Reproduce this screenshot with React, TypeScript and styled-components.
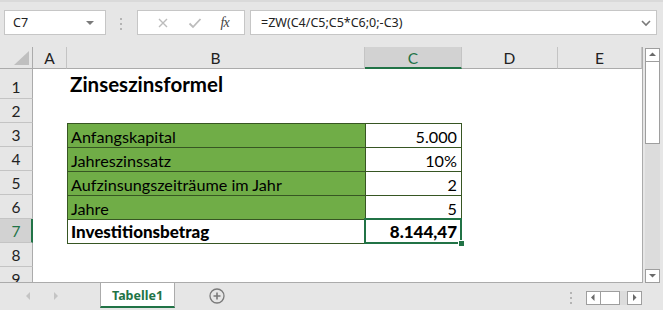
import styled, { createGlobalStyle, css } from "styled-components";

const GlobalStyle = createGlobalStyle`
	html, body {
		margin: 0;
		padding: 0;
		background: #e6e6e6;
	}
`;

const GREEN = "#217346";
const TABLE_LINE = "#375623";
const FILL = "#70ad47";
const UI_FONT = `"Noto Sans", "Open Sans", sans-serif`;
const CELL_FONT = `Lato, "Liberation Sans", sans-serif`;

const StyledWindow = styled.div`
	width: 663px;
	height: 310px;
	display: flex;
	flex-direction: column;
	background: #e6e6e6;
	overflow: hidden;
`;

/* ---------- formula bar ---------- */

const StyledFormulaBar = styled.div`
	height: 47px;
	display: flex;
	align-items: flex-start;
	padding: 10px 6px 0 4px;
	box-sizing: border-box;
	border-top: 2px solid #dadada;
`;

const StyledBox = styled.div<{ width?: number }>`
	height: 25px;
	box-sizing: border-box;
	background: #fff;
	border: 1px solid #c6c6c6;
	display: flex;
	align-items: center;
	font-family: ${UI_FONT};
	font-size: 12.5px;
	color: #222;
	margin-top: -2px;
	${p =>
		p.width
			? css`
					width: ${p.width}px;
					flex: none;
			  `
			: css`
					flex: 1;
			  `}
`;

const StyledNameText = styled.span`
	flex: 1;
	padding-left: 8px;
`;

const StyledFormulaText = styled.span`
	flex: 1;
	padding-left: 10px;
`;

const StyledGrip = styled.div`
	width: 31px;
	display: flex;
	justify-content: center;
	padding-top: 6px;
`;

const StyledFxGroup = styled(StyledBox)`
	margin-right: 5px;
	justify-content: space-around;
	padding: 0 6px 0 10px;
`;

const StyledFx = styled.span`
	font-family: "Liberation Serif", serif;
	font-style: italic;
	font-size: 14px;
	color: #444;
	letter-spacing: -1px;
`;

function GripDots() {
	return (
		<svg width="3" height="12" viewBox="0 0 3 12">
			<rect x="0" y="0" width="2" height="2" fill="#b4b4b4" />
			<rect x="0" y="5" width="2" height="2" fill="#b4b4b4" />
			<rect x="0" y="10" width="2" height="2" fill="#b4b4b4" />
		</svg>
	);
}

function FormulaBar() {
	return (
		<StyledFormulaBar>
			<StyledBox width={102}>
				<StyledNameText>C7</StyledNameText>
				<svg width="18" height="8" viewBox="0 0 18 8" style={{ marginRight: 4 }}>
					<path d="M3 2 L11 2 L7 6 Z" fill="#7a7a7a" />
				</svg>
			</StyledBox>
			<StyledGrip>
				<GripDots />
			</StyledGrip>
			<StyledFxGroup width={108}>
				<svg width="12" height="12" viewBox="0 0 12 12">
					<path d="M2 2 L10 10 M10 2 L2 10" stroke="#bcbcbc" strokeWidth="1.4" />
				</svg>
				<svg width="14" height="12" viewBox="0 0 14 12">
					<path d="M1.5 6.5 L5 10 L12.5 2" stroke="#bcbcbc" strokeWidth="1.8" fill="none" />
				</svg>
				<StyledFx>fx</StyledFx>
			</StyledFxGroup>
			<StyledBox>
				<StyledFormulaText>=ZW(C4/C5;C5*C6;0;-C3)</StyledFormulaText>
				<svg width="12" height="8" viewBox="0 0 12 8" style={{ marginRight: 4 }}>
					<path d="M2 2 L6 6 L10 2" stroke="#7a7a7a" strokeWidth="1.6" fill="none" />
				</svg>
			</StyledBox>
		</StyledFormulaBar>
	);
}

/* ---------- sheet ---------- */

const StyledSheetArea = styled.div`
	height: 236px;
	display: flex;
`;

const StyledGrid = styled.div`
	width: 643px;
	height: 236px;
	box-sizing: border-box;
	border-right: 1px solid #ababab;
	border-bottom: 1px solid #ababab;
	background: #fff;
	overflow: hidden;
	display: grid;
	grid-template-columns: 33px 34px 298px 97px 96px 84px;
	grid-template-rows: 22px 30px repeat(8, 24px);
`;

const headerBase = css<{ active?: boolean }>`
	box-sizing: border-box;
	background: ${p => (p.active ? "#d2d2d2" : "#e6e6e6")};
	color: ${p => (p.active ? GREEN : "#222")};
	font-family: ${CELL_FONT};
	font-size: 15.5px;
	display: flex;
	align-items: center;
	justify-content: center;
`;

const StyledCorner = styled.div`
	grid-row: 1;
	grid-column: 1;
	background: #e6e6e6;
	border-right: 1px solid #ababab;
	border-bottom: 1px solid #ababab;
	display: flex;
	align-items: flex-end;
	justify-content: flex-end;
	padding: 0 3px 3px 0;
`;

const StyledColHeader = styled.div<{ active?: boolean; col: number }>`
	${headerBase}
	grid-row: 1;
	grid-column: ${p => p.col};
	border-right: 1px solid #c4c4c4;
	border-bottom: ${p => (p.active ? `2px solid ${GREEN}` : "1px solid #ababab")};
	padding-top: ${p => (p.active ? 1 : 0)}px;
`;

const StyledRowHeader = styled.div<{ active?: boolean; row: number }>`
	${headerBase}
	grid-column: 1;
	grid-row: ${p => p.row};
	align-items: flex-end;
	padding-bottom: 2px;
	border-bottom: 1px solid #c4c4c4;
	border-right: ${p => (p.active ? `2px solid ${GREEN}` : "1px solid #ababab")};
	padding-left: ${p => (p.active ? 1 : 0)}px;
`;

const StyledTitle = styled.div`
	grid-column: 3;
	grid-row: 2;
	align-self: end;
	padding: 0 0 3px 3px;
	font-family: ${CELL_FONT};
	font-weight: 700;
	font-size: 20.5px;
	color: #000;
`;

const StyledTable = styled.div`
	grid-column: 3 / 5;
	grid-row: 4 / 9;
	display: grid;
	grid-template-columns: 298px 1fr;
	grid-template-rows: repeat(5, 1fr);
	border-right: 1px solid ${TABLE_LINE};
	border-bottom: 1px solid ${TABLE_LINE};
	box-sizing: border-box;
	height: 121px;
`;

const StyledCell = styled.div<{ filled?: boolean; number?: boolean; bold?: boolean; selected?: boolean }>`
	position: relative;
	box-sizing: border-box;
	border-top: 1px solid ${TABLE_LINE};
	border-left: 1px solid ${TABLE_LINE};
	background: ${p => (p.filled ? FILL : "#fff")};
	font-family: ${CELL_FONT};
	font-size: ${p => (p.bold ? 17 : 16.2)}px;
	font-weight: ${p => (p.bold ? 900 : 400)};
	color: #000;
	display: flex;
	align-items: flex-end;
	justify-content: ${p => (p.number ? "flex-end" : "flex-start")};
	padding: 0 4px 1px 3px;
	${p =>
		p.selected &&
		css`
			outline: 2px solid ${GREEN};
			outline-offset: -1px;
			&::after {
				content: "";
				position: absolute;
				right: -4px;
				bottom: -4px;
				width: 5px;
				height: 5px;
				background: ${GREEN};
				border: 1px solid #fff;
				z-index: 2;
			}
		`}
`;

const rows = [
	{ label: "Anfangskapital", value: "5.000" },
	{ label: "Jahreszinssatz", value: "10%" },
	{ label: "Aufzinsungszeiträume im Jahr", value: "2" },
	{ label: "Jahre", value: "5" },
	{ label: "Investitionsbetrag", value: "8.144,47", total: true }
];

function Sheet() {
	return (
		<StyledGrid>
			<StyledCorner>
				<svg width="15" height="14" viewBox="0 0 15 14">
					<path d="M15 0 L15 14 L0 14 Z" fill="#bfbfbf" />
				</svg>
			</StyledCorner>
			{["A", "B", "C", "D", "E"].map((c, i) => (
				<StyledColHeader key={c} col={i + 2} active={c === "C"}>
					{c}
				</StyledColHeader>
			))}
			{[1, 2, 3, 4, 5, 6, 7, 8, 9].map(n => (
				<StyledRowHeader key={n} row={n + 1} active={n === 7}>
					{n}
				</StyledRowHeader>
			))}
			<StyledTitle>Zinseszinsformel</StyledTitle>
			<StyledTable>
				{rows.map(r => [
					<StyledCell key={r.label} filled={!r.total} bold={r.total}>
						{r.label}
					</StyledCell>,
					<StyledCell key={r.label + "v"} number bold={r.total} selected={r.total}>
						{r.value}
					</StyledCell>
				])}
			</StyledTable>
		</StyledGrid>
	);
}

/* ---------- scroll bars ---------- */

const StyledVScroll = styled.div`
	width: 20px;
	display: flex;
	flex-direction: column;
	padding: 1px 0 0 2px;
	box-sizing: border-box;
`;

const StyledArrowBox = styled.div<{ w?: number; h?: number }>`
	width: ${p => p.w ?? 15}px;
	height: ${p => p.h ?? 14}px;
	box-sizing: border-box;
	background: #fff;
	border: 1px solid #9e9e9e;
	display: flex;
	align-items: center;
	justify-content: center;
	flex: none;
`;

const StyledTrack = styled.div<{ w?: number; h?: number }>`
	background: #dcdcdc;
	width: ${p => (p.w ? `${p.w}px` : "15px")};
	height: ${p => (p.h ? `${p.h}px` : "auto")};
	flex: ${p => (p.h || p.w ? "none" : 1)};
`;

const StyledThumb = styled.div<{ w: number; h: number; horizontal?: boolean }>`
	width: ${p => p.w}px;
	height: ${p => p.h}px;
	box-sizing: border-box;
	background: #fff;
	border: 1px solid #9e9e9e;
	${p => (p.horizontal ? "border-left: none;" : "border-top: none;")}
	flex: none;
`;

function Arrow({ dir }: { dir: "up" | "down" | "left" | "right" }) {
	const d = {
		up: "M1 5 L4.5 1.5 L8 5 Z",
		down: "M1 2 L4.5 5.5 L8 2 Z",
		left: "M5.5 1 L2 4.5 L5.5 8 Z",
		right: "M3 1 L6.5 4.5 L3 8 Z"
	}[dir];
	return (
		<svg width="9" height="9" viewBox="0 0 9 9" style={{ display: "block" }}>
			<path d={d} fill="#6a6a6a" />
		</svg>
	);
}

function VScroll() {
	return (
		<StyledVScroll>
			<StyledArrowBox>
				<Arrow dir="up" />
			</StyledArrowBox>
			<StyledThumb w={15} h={82} />
			<StyledTrack />
			<StyledArrowBox>
				<Arrow dir="down" />
			</StyledArrowBox>
		</StyledVScroll>
	);
}

/* ---------- tab bar ---------- */

const StyledTabBar = styled.div`
	height: 27px;
	display: flex;
	align-items: flex-start;
`;

const StyledNav = styled.div`
	width: 100px;
	height: 25px;
	display: flex;
	align-items: center;
	gap: 20px;
	padding-left: 24px;
	box-sizing: border-box;
`;

const StyledTab = styled.div<{ active?: boolean }>`
	width: 75px;
	height: 25px;
	box-sizing: border-box;
	background: ${p => (p.active ? "#fff" : "transparent")};
	border-left: 1px solid #ababab;
	border-right: 1px solid #ababab;
	border-bottom: 2px solid ${p => (p.active ? GREEN : "transparent")};
	color: ${GREEN};
	font-family: ${UI_FONT};
	font-weight: 700;
	font-size: 12.5px;
	display: flex;
	align-items: center;
	justify-content: center;
	padding-top: 1px;
`;

const StyledAddSheet = styled.div`
	width: 82px;
	height: 25px;
	display: flex;
	align-items: center;
	justify-content: center;
	padding-left: 1px;
`;

const StyledHScroll = styled.div`
	margin-left: auto;
	margin-right: 21px;
	height: 25px;
	display: flex;
	align-items: center;
	padding-top: 4px;
	box-sizing: border-box;
`;

const StyledHGrip = styled.div`
	margin-right: 13px;
	display: flex;
`;

function TabBar() {
	return (
		<StyledTabBar>
			<StyledNav>
				<svg width="8" height="10" viewBox="0 0 8 10">
					<path d="M6 1 L2 5 L6 9 Z" fill="#c4c4c4" />
				</svg>
				<svg width="8" height="10" viewBox="0 0 8 10">
					<path d="M2 1 L6 5 L2 9 Z" fill="#c4c4c4" />
				</svg>
			</StyledNav>
			<StyledTab active>Tabelle1</StyledTab>
			<StyledAddSheet>
				<svg width="16" height="16" viewBox="0 0 16 16">
					<circle cx="8" cy="8" r="7" fill="none" stroke="#7a7a7a" strokeWidth="1.3" />
					<path d="M8 4.5 V11.5 M4.5 8 H11.5" stroke="#7a7a7a" strokeWidth="1.6" />
				</svg>
			</StyledAddSheet>
			<StyledHScroll>
				<StyledHGrip>
					<GripDots />
				</StyledHGrip>
				<StyledArrowBox>
					<Arrow dir="left" />
				</StyledArrowBox>
				<StyledThumb w={19} h={14} horizontal />
				<StyledTrack w={7} h={14} />
				<StyledArrowBox>
					<Arrow dir="right" />
				</StyledArrowBox>
			</StyledHScroll>
		</StyledTabBar>
	);
}

export default function App() {
	return (
		<>
			<GlobalStyle />
			<StyledWindow>
				<FormulaBar />
				<StyledSheetArea>
					<Sheet />
					<VScroll />
				</StyledSheetArea>
				<TabBar />
			</StyledWindow>
		</>
	);
}
